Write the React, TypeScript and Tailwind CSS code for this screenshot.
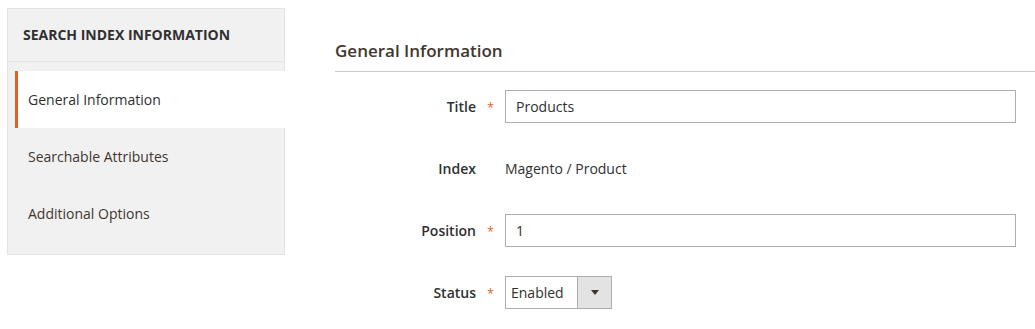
import React from "react";

const Row = ({
  label,
  required,
  children,
}: {
  label: string;
  required?: boolean;
  children: React.ReactNode;
}) => (
  <div className="flex items-center h-[33px]">
    <div className="w-[141px] text-right text-[14px] font-semibold text-[#303030]">{label}</div>
    <div className="w-[29px] flex justify-center">
      {required && <span className="text-[#e0601f] text-[12px] pt-[2px]">*</span>}
    </div>
    {children}
  </div>
);

export default function App() {
  const items = ["General Information", "Searchable Attributes", "Additional Options"];
  return (
    <div
      className="w-[1035px] h-[329px] bg-white flex pl-[7px] pt-[8px] overflow-hidden"
      style={{ fontFamily: '"Open Sans", "Liberation Sans", sans-serif' }}
    >
      <div className="w-[278px] h-[247px] bg-[#f1f1f1] border border-[#e3e3e3] flex flex-col">
        <div className="h-[53px] flex items-center pl-[15px] pb-[2px] border-b border-[#e3e3e3] text-[14px] font-bold text-[#303030] uppercase">
          Search Index Information
        </div>
        <div className="pt-[9px] flex flex-col">
          {items.map((it, i) => (
            <div
              key={it}
              className={
                i === 0
                  ? "h-[57px] ml-[7px] mr-[-1px] border-l-[3px] border-[#e0601f] bg-white flex items-center pl-[10px] text-[14px] text-[#303030]"
                  : "h-[57px] ml-[7px] border-l-[3px] border-transparent flex items-center pl-[10px] text-[14px] text-[#41362f]"
              }
            >
              {it}
            </div>
          ))}
        </div>
      </div>
      <div className="flex-1 ml-[50px] pt-[30px]">
        <div className="text-[17px] font-semibold text-[#41362f] leading-[26px] pb-[7px] border-b border-[#cccccc]">
          General Information
        </div>
        <div className="flex flex-col gap-[29px] pt-[18px] pr-[19px]">
          <Row label="Title" required>
            <div className="flex-1 h-[33px] border border-[#adadad] flex items-center pl-[10px] text-[14px] text-[#303030]">
              Products
            </div>
          </Row>
          <Row label="Index">
            <div className="flex-1 text-[14px] text-[#303030]">Magento / Product</div>
          </Row>
          <Row label="Position" required>
            <div className="flex-1 h-[33px] border border-[#adadad] flex items-center pl-[10px] text-[14px] text-[#303030]">
              1
            </div>
          </Row>
          <Row label="Status" required>
            <div className="w-[107px] h-[33px] border border-[#adadad] flex">
              <div className="flex-1 flex items-center pl-[5px] text-[14px] text-[#303030]">Enabled</div>
              <div className="w-[34px] bg-[#e3e3e3] border-l border-[#adadad] flex items-center justify-center">
                <svg width="8" height="5" viewBox="0 0 8 5">
                  <path d="M0 0 L8 0 L4 5 Z" fill="#41362f" />
                </svg>
              </div>
            </div>
          </Row>
        </div>
      </div>
    </div>
  );
}
